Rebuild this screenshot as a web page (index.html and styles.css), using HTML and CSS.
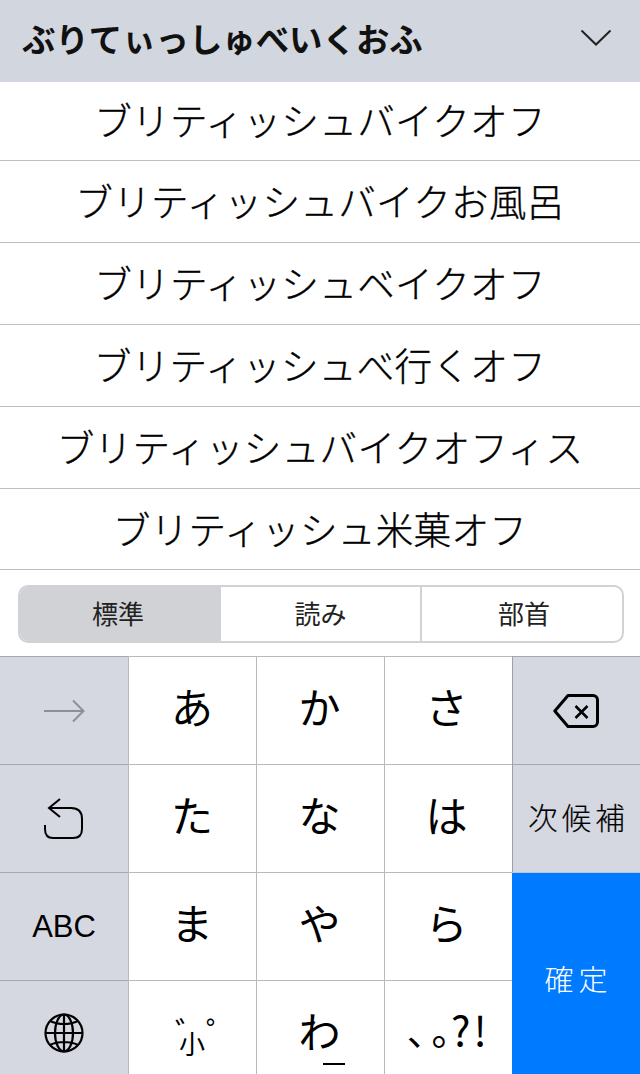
FILE: index.html
```html
<!DOCTYPE html>
<html lang="ja">
<head>
<meta charset="utf-8">
<title>Keyboard</title>
<link rel="stylesheet" href="styles.css">
</head>
<body>
<div class="screen">
  <header class="reading">
    <span class="reading-text">ぶりてぃっしゅべいくおふ</span>
    <svg class="chevron" viewBox="0 0 32 20"><path d="M1.500 2.500 16 16.500 30.500 2.500"/></svg>
  </header>
  <ul class="candidates">
    <li class="cand">ブリティッシュバイクオフ</li>
    <li class="cand">ブリティッシュバイクお風呂</li>
    <li class="cand">ブリティッシュベイクオフ</li>
    <li class="cand">ブリティッシュべ行くオフ</li>
    <li class="cand">ブリティッシュバイクオフィス</li>
    <li class="cand">ブリティッシュ米菓オフ</li>
  </ul>
  <div class="seg-wrap">
    <div class="seg">
      <div class="seg-item active">標準</div>
      <div class="seg-item">読み</div>
      <div class="seg-item last">部首</div>
    </div>
  </div>
  <div class="keys">
    <div class="key fn"><svg class="icon arrow" viewBox="0 0 42 24"><path d="M1 12H40M30 1.500 40.500 12 30 22.500"/></svg></div>
    <div class="key">あ</div>
    <div class="key">か</div>
    <div class="key">さ</div>
    <div class="key fn del-key"><svg class="icon del" viewBox="0 0 46 34"><path d="M15 1.500H40A4.500 4.500 0 0 1 44.500 6V28A4.500 4.500 0 0 1 40 32.500H15L1.800 17Z"/><path class="x" d="M22.500 12 34.500 24M34.500 12 22.500 24"/></svg></div>

    <div class="key fn"><svg class="icon undo" viewBox="0 0 40 44"><path d="M16 2 5 11 16 20M5 11H27C35 11 38 15 38 22V32C38 38 35 41 29 41H9C4 41 1 38 1 32V28"/></svg></div>
    <div class="key">た</div>
    <div class="key">な</div>
    <div class="key">は</div>
    <div class="key fn small">次候補</div>

    <div class="key fn latin">ABC</div>
    <div class="key">ま</div>
    <div class="key">や</div>
    <div class="key">ら</div>
    <div class="key confirm">確定</div>

    <div class="key fn globe-key"><svg class="icon globe" viewBox="0 0 40 40"><circle cx="20" cy="20" r="18.500"/><ellipse cx="20" cy="20" rx="9" ry="18.500"/><path d="M20 1.500V38.500M1.500 20H38.500M6 8C14 12 26 12 34 8M6 32C14 28 26 28 34 32"/></svg></div>
    <div class="key komoji"><span class="ko">゛゜<br>小</span></div>
    <div class="key wa">わ<span class="wa-bar"></span></div>
    <div class="key punct"><span class="kuten">、。</span><span class="qm">?!</span></div>
  </div>
</div>
</body>
</html>
```
FILE: styles.css
```css
* { box-sizing: border-box; }
html, body { margin: 0; padding: 0; height: 1074px; overflow: hidden; background: #fff; }
body { font-family: "Noto Sans CJK JP", "Liberation Sans", sans-serif; color: #000; }
.screen { width: 640px; height: 1074px; overflow: hidden; display: flex; flex-direction: column; }

.reading { height: 82px; background: #d2d6de; display: flex; align-items: center; justify-content: space-between; padding: 0 28px 7px 22px; flex: none; }
.reading-text { font-size: 33.4px; font-weight: 700; line-height: 1; color: #111; white-space: nowrap; }
.chevron { width: 32px; height: 20px; fill: none; stroke: #222; stroke-width: 2; }

.candidates { list-style: none; margin: 0; padding: 0; flex: none; }
.cand { height: 82px; border-bottom: 1px solid #bcbcc4; display: flex; align-items: center; justify-content: center; font-size: 37.600px; letter-spacing: 0.3px; font-weight: 300; -webkit-text-stroke: 0.35px #000; line-height: 1; white-space: nowrap; padding-bottom: 3px; }
.cand:first-child { height: 79px; padding-bottom: 5px; }
.cand:last-child { height: 81px; }

.seg-wrap { flex: none; height: 86px; padding: 15px 16px 0 18px; }
.seg { height: 58px; display: grid; grid-template-columns: 199px 201px 1fr; border: 2px solid #d1d2d5; border-radius: 10px; overflow: hidden; background: #fff; }
.seg-item { display: flex; align-items: center; justify-content: center; font-size: 26px; color: #222; line-height: 1; border-left: 2px solid #d1d2d5; padding-bottom: 3px; }
.seg-item:first-child { border-left: 0; padding-right: 3px; }
.seg-item.active { background: #d1d2d5; }
.seg-item.last { padding-left: 4px; }

.keys { flex: 1; display: grid; grid-template-columns: repeat(5, 128px); grid-template-rows: repeat(4, 108px); }
.key { background: #fff; border-top: 1px solid #b8bac2; border-left: 1px solid #b8bac2; display: flex; align-items: center; justify-content: center; font-size: 42px; line-height: 1; font-weight: 400; padding-bottom: 10px; }
.key.fn { background: #d5d8e1; border-top-color: #a5a7b0; padding-bottom: 0; }
.keys > .key:nth-child(5n+1) { border-left: 0; }
.keys > .key:nth-child(5n+2) { padding-right: 1px; }
.keys > .key:nth-child(5n+3) { padding-right: 2px; }
.keys > .key:nth-child(5n+4) { padding-right: 4px; }
.keys > .key:nth-child(5n) { border-left-color: #9c9ea8; }
.key.fn.small { font-size: 29.500px; letter-spacing: 4px; font-weight: 300; -webkit-text-stroke: 0.2px #000; color: #000; padding: 0 0 4px 4px; }
.key.fn.latin { font-family: "Liberation Sans", sans-serif; font-size: 31px; padding-bottom: 1px; }
.key.confirm { grid-column: 5; grid-row: 3 / span 2; background: #007aff; color: #fff; font-size: 29px; letter-spacing: 5px; font-weight: 300; border-left: 0; padding: 0 0 4px 5px; border-top-color: #b8c8e0; }
.del-key { padding-right: 2px; }
.key.globe-key { padding-bottom: 4px; }

.icon { fill: none; stroke: #000; display: block; }
.arrow { width: 42px; height: 24px; stroke: #8e8f94; stroke-width: 2; }
.del { width: 46px; height: 34px; stroke-width: 3; stroke-linejoin: round; }
.del .x { stroke-width: 2.500; }
.undo { width: 40px; height: 44px; stroke-width: 2; }
.globe { width: 40px; height: 40px; stroke-width: 2.200; }

.keys > .key.komoji { justify-content: flex-start; align-items: flex-start; padding: 44px 0 0 50px; }
.ko { display: block; font-size: 26px; line-height: 12px; text-indent: -4px; white-space: nowrap; font-weight: 400; }
.ko::first-line { font-size: 32px; letter-spacing: -1px; }
.wa { position: relative; }
.wa-bar { position: absolute; left: 66px; top: 82px; width: 22px; height: 2px; background: #000; }
.keys > .key.punct { font-size: 38px; white-space: nowrap; justify-content: flex-start; padding: 0 0 12px 22px; }
.kuten { font-feature-settings: "palt"; letter-spacing: 5px; }
.qm { font-size: 41px; letter-spacing: 3px; margin-left: -4px; }
```
